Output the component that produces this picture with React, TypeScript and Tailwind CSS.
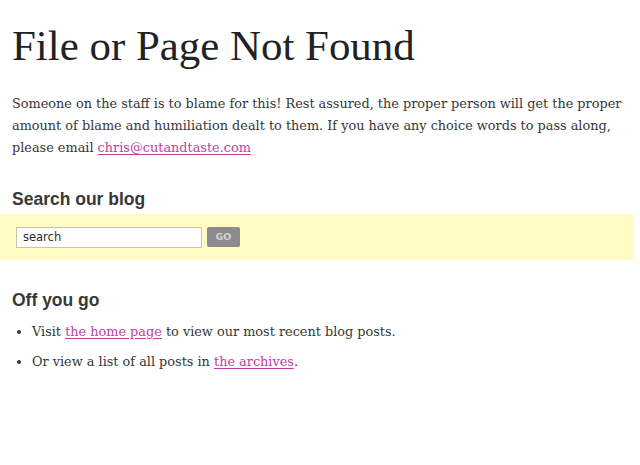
import React from "react";

const body = { fontFamily: '"DejaVu Serif", Georgia, serif' };
const sans = { fontFamily: '"Liberation Sans", Arial, sans-serif' };
const ui = { fontFamily: '"DejaVu Sans", Verdana, sans-serif' };

const App = () => {
  return (
    <div className="w-[640px] h-[465px] bg-white text-[#333]" style={{ fontFamily: '"Liberation Serif", serif' }}>
      <div className="px-3 pt-[22px]">
        <h1 className="text-[42.9px] leading-[48px] text-[#222]">File or Page Not Found</h1>
        <p className="mt-[23px] text-[12.85px] leading-[22px] text-[#363636] whitespace-nowrap" style={body}>
          Someone on the staff is to blame for this! Rest assured, the proper person will get the proper
          <br />
          amount of blame and humiliation dealt to them. If you have any choice words to pass along,
          <br />
          please email{" "}
          <a href="#" className="text-[#c0409e] underline underline-offset-2">
            chris@cutandtaste.com
          </a>
        </p>
        <h2 className="mt-[29px] text-[17.5px] font-bold text-[#383838] leading-[22px]" style={sans}>
          Search our blog
        </h2>
      </div>
      <div className="mt-[4px] w-[633px] h-[46px] bg-[#fefbc4] flex items-center px-4 gap-[5px]">
        <input
          defaultValue="search"
          className="w-[186px] h-[21px] border border-[#c8c6a8] bg-white px-[6px] text-[11.5px] text-[#2e2e2e] outline-none"
          style={ui}
        />
        <button className="w-[33px] h-[20px] bg-[#8c8c8c] text-[#d4d4d4] text-[9.5px] font-bold rounded-[2px]" style={ui}>
          GO
        </button>
      </div>
      <div className="px-3">
        <h2 className="mt-[29px] text-[17.5px] font-bold text-[#383838] leading-[22px]" style={sans}>
          Off you go
        </h2>
        <ul className="mt-[6px] pl-[20px] list-disc text-[12.85px] text-[#363636]" style={body}>
          <li className="leading-[30px]">
            Visit{" "}
            <a href="#" className="text-[#c0409e] underline underline-offset-2">
              the home page
            </a>{" "}
            to view our most recent blog posts.
          </li>
          <li className="leading-[30px]">
            Or view a list of all posts in{" "}
            <a href="#" className="text-[#c0409e] underline underline-offset-2">
              the archives
            </a>
            .
          </li>
        </ul>
      </div>
    </div>
  );
};

export default App;
